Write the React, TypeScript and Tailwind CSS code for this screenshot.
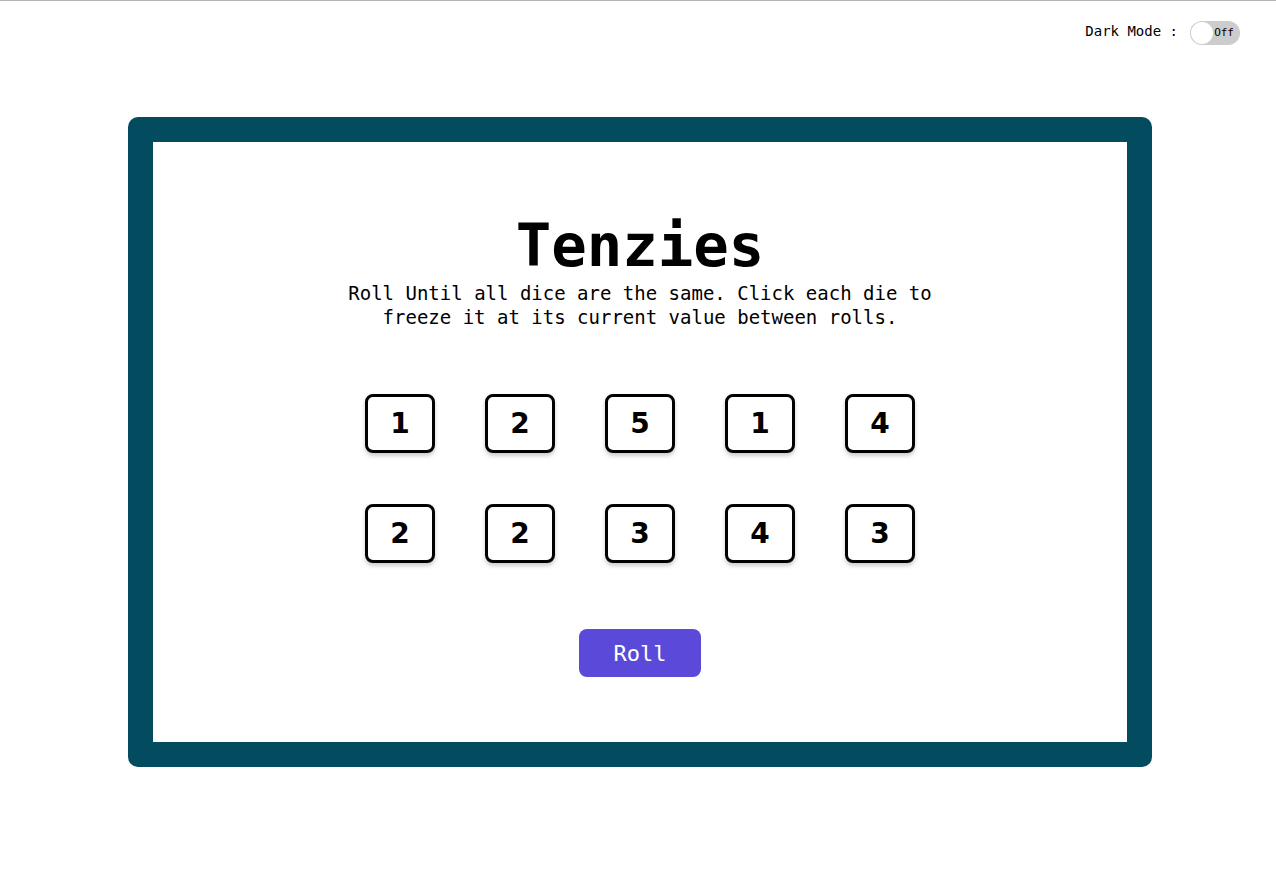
import { useState } from "react";

const mono = "font-['DejaVu_Sans_Mono','Liberation_Mono',monospace]";

function Die({ value, held, onClick }: { value: number; held: boolean; onClick: () => void }) {
  return (
    <button
      onClick={onClick}
      className={`w-[70px] h-[59px] rounded-lg border-[3px] border-black flex items-center justify-center text-[28px] font-bold text-black shadow-[0_3px_4px_rgba(0,0,0,0.2)] font-['DejaVu_Sans',sans-serif] ${
        held ? "bg-[#59e391]" : "bg-white"
      }`}
    >
      {value}
    </button>
  );
}

export default function App() {
  const [dark, setDark] = useState(false);
  const [dice, setDice] = useState(
    [1, 2, 5, 1, 4, 2, 2, 3, 4, 3].map((v, i) => ({ id: i, value: v, held: false }))
  );

  function roll() {
    setDice((d) => d.map((x) => (x.held ? x : { ...x, value: Math.ceil(Math.random() * 6) })));
  }

  function hold(id: number) {
    setDice((d) => d.map((x) => (x.id === id ? { ...x, held: !x.held } : x)));
  }

  return (
    <div className={`min-h-[882px] bg-white border-t border-[#b4b4b4] ${mono}`}>
      {/* Dark mode switch */}
      <div className="flex justify-end items-center gap-3 pt-5 pr-9 h-[44px]">
        <span className="text-[14px] text-black mb-[4px]">Dark Mode :</span>
        <button
          onClick={() => setDark(!dark)}
          className="relative w-[50px] h-[24px] rounded-full bg-[#cccccc] flex items-center"
          aria-label="Toggle dark mode"
        >
          <span className="absolute left-[1px] top-[1px] w-[22px] h-[22px] rounded-full bg-white" />
          <span className="ml-auto mr-[6px] text-[11px] text-black">{dark ? "On" : "Off"}</span>
        </button>
      </div>

      <main className="ml-[128px] mt-[72px] w-[1024px] h-[650px] bg-[#034b5f] rounded-[10px] p-[25px]">
        <div className="w-full h-full bg-white flex flex-col items-center pt-[74px]">
          <h1 className="text-[59px] leading-[60px] font-bold text-black">Tenzies</h1>
          <p className="mt-[5px] w-[600px] text-center text-[19px] leading-[24px] text-black">
            Roll Until all dice are the same. Click each die to freeze it at its current value between rolls.
          </p>

          <div className="mt-[65px] grid grid-cols-5 gap-x-[50px] gap-y-[51px]">
            {dice.map((d) => (
              <Die key={d.id} value={d.value} held={d.held} onClick={() => hold(d.id)} />
            ))}
          </div>

          <button
            onClick={roll}
            className="mt-[66px] w-[122px] h-[48px] rounded-lg bg-[#5b4ad9] text-white text-[22px]"
          >
            Roll
          </button>
        </div>
      </main>
    </div>
  );
}
